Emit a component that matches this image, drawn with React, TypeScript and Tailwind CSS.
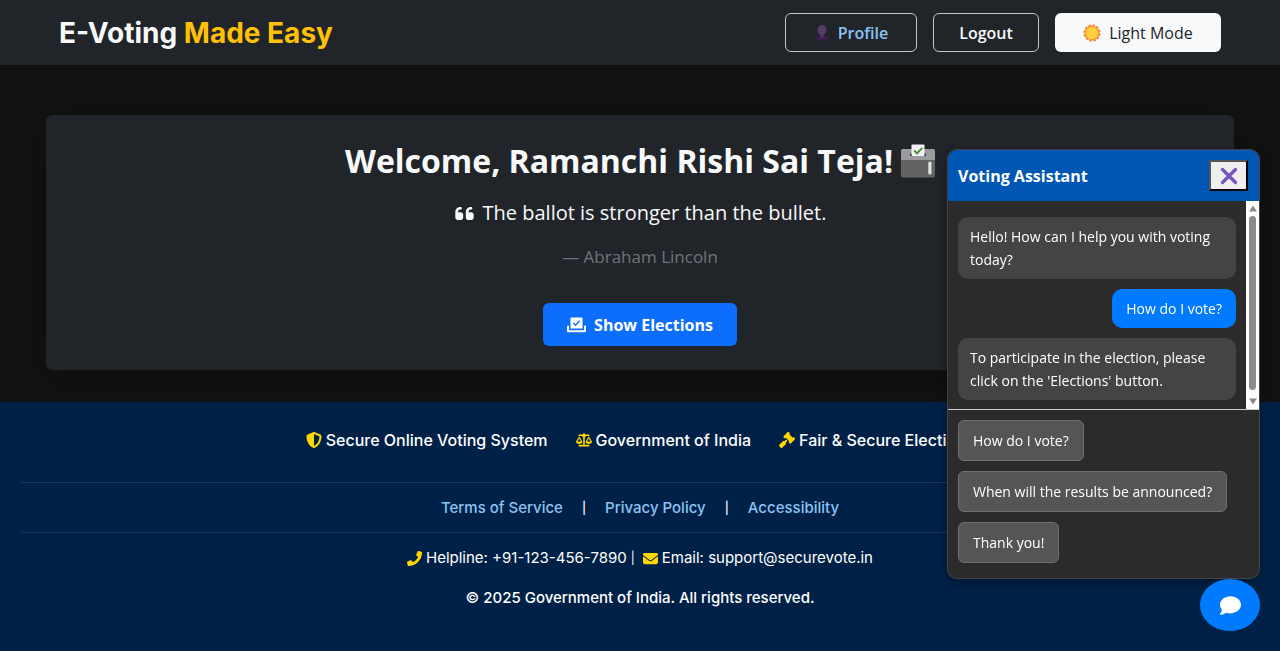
import { FaPhone } from 'react-icons/fa';
import { FaComment, FaEnvelope, FaGavel, FaQuoteLeft, FaScaleBalanced, FaShieldHalved } from 'react-icons/fa6';

const messages = [
  { from: 'bot', text: 'Hello! How can I help you with voting today?' },
  { from: 'user', text: 'How do I vote?' },
  { from: 'bot', text: "To participate in the election, please click on the 'Elections' button." },
];

const quickReplies = ['How do I vote?', 'When will the results be announced?', 'Thank you!'];

function ProfileIcon() {
  return (
    <svg viewBox="0 0 16 16" className="size-4" aria-hidden="true">
      <path d="M.8 15.600c.2-2.400 1.600-4 4.200-4.700l3 3.600 3-3.600c2.600.7 4 2.300 4.200 4.700z" fill="#3a1d4c" />
      <path d="M5.800 8h4.400v3.600L8 14.500l-2.200-2.900z" fill="#4c2d62" />
      <ellipse cx="8" cy="5" rx="4.500" ry="4.900" fill="#593a6d" />
    </svg>
  );
}

function SunIcon() {
  return (
    <svg viewBox="0 0 18 18" className="size-[18px]" aria-hidden="true">
      <circle cx="9" cy="9" r="7.600" fill="none" stroke="#f78a32" strokeWidth="2" strokeDasharray="2.700 1.280" />
      <circle cx="9" cy="9" r="7.300" fill="#f98f35" />
      <circle cx="9" cy="9" r="6.200" fill="#ffcf3f" />
    </svg>
  );
}

function BallotBoxIcon() {
  return (
    <svg viewBox="0 0 34 34" className="size-[34px]" aria-hidden="true">
      <rect x="0" y="5" width="34" height="28.500" rx="2" fill="#636363" />
      <path d="M0 16V7a2 2 0 0 1 2-2h30a2 2 0 0 1 2 2v9z" fill="#9b9b9b" />
      <rect x="9" y="9.500" width="16" height="2.500" rx="1" fill="#1d2340" />
      <rect x="10.500" y="0.500" width="13" height="11.500" rx="0.800" fill="#f4f0f7" />
      <path d="M13.200 6.500l2.800 2.800 5.200-5.500" fill="none" stroke="#44902f" strokeWidth="1.900" />
      <rect x="27.300" y="17.500" width="3.200" height="13" rx="1.500" fill="#e2e2e2" />
    </svg>
  );
}

function BallotIcon() {
  return (
    <svg viewBox="0 0 19 16" className="h-4 w-[19px]" aria-hidden="true">
      <path d="M4.500 .5h10a1 1 0 0 1 1 1V11.500H3.500V1.500a1 1 0 0 1 1-1z" fill="#fff" />
      <path d="M6.300 6l2.300 2.300 4.100-4.500" fill="none" stroke="#0d6efd" strokeWidth="1.400" />
      <path d="M1 9.500v4.300a.5.5 0 0 0 .5.5h16a.5.5 0 0 0 .5-.5V9.500" fill="none" stroke="#fff" strokeWidth="2" strokeLinecap="round" />
    </svg>
  );
}

function Scrollbar() {
  return (
    <div className="flex w-[13px] shrink-0 flex-col items-center bg-white py-1" aria-hidden="true">
      <svg viewBox="0 0 8 7" className="h-[7px] w-2"><path d="M4 .5L8 6.500H0z" fill="#8b8b8b" /></svg>
      <div className="mt-1 mb-2 w-[7px] grow rounded-full bg-[#8b8b8b]" />
      <svg viewBox="0 0 8 7" className="h-[7px] w-2"><path d="M0 .5h8L4 6.500z" fill="#8b8b8b" /></svg>
    </div>
  );
}

export default function App() {
  return (
    <div className="flex min-h-screen flex-col bg-[#121212] font-['Open_Sans','Noto_Sans',sans-serif] text-[#f8f9fa]">
      <header className="flex h-[65px] items-center justify-between bg-[#212529] px-[59px]">
        <h1 className="font-['Inter',sans-serif] text-[28px] leading-none font-bold">
          E-Voting <span className="text-[#ffc107]">Made Easy</span>
        </h1>
        <nav className="flex gap-4 text-base font-semibold">
          <a href="#profile" className="flex h-[39px] w-[132px] items-center justify-center gap-2 rounded-md border border-[#c4c6c8] text-[#8bc4f4]">
            <ProfileIcon /> Profile
          </a>
          <button type="button" className="h-[39px] w-[106px] rounded-md border border-[#c4c6c8]">Logout</button>
          <button type="button" className="flex h-[39px] w-[166px] items-center justify-center gap-2 rounded-md bg-[#f8f9fa] font-medium text-[#212529]">
            <SunIcon /> Light Mode
          </button>
        </nav>
      </header>

      <main className="px-[46px] pt-[50px] pb-8">
        <section className="flex h-[255px] flex-col items-center rounded-md bg-[#212529] pt-6 shadow-[0_8px_48px_rgba(0,0,0,0.25)]">
          <h2 className="flex items-center gap-2 text-[32px] leading-[44px] font-bold">
            Welcome, Ramanchi Rishi Sai Teja! <BallotBoxIcon />
          </h2>
          <p className="mt-[14px] flex items-center gap-2 text-xl leading-8">
            <FaQuoteLeft className="size-[21px]" /> The ballot is stronger than the bullet.
          </p>
          <p className="mt-4 text-[17px] leading-6 text-[#6c757d]">— Abraham Lincoln</p>
          <button type="button" className="mt-[34px] flex h-[43px] w-[194px] items-center justify-center gap-2 rounded-md bg-[#0d6efd] text-base font-bold text-white">
            <BallotIcon /> Show Elections
          </button>
        </section>
      </main>

      <footer className="grow bg-[#002147] px-[21px] pt-[26px] font-['Inter',sans-serif] text-[15px] leading-6 text-white">
        <div className="flex justify-center gap-7 pb-[30px] text-base font-medium">
          <span className="flex items-center gap-1"><FaShieldHalved className="size-4 text-[#ffd700]" />Secure Online Voting System</span>
          <span className="flex items-center gap-1"><FaScaleBalanced className="size-4 text-[#ffd700]" />Government of India</span>
          <span className="flex items-center gap-1"><FaGavel className="size-4 text-[#ffd700]" />Fair &amp; Secure Elections</span>
        </div>
        <nav className="flex h-[51px] items-center justify-center gap-[19px] border-y border-[#1a375a] font-medium">
          <a href="#terms" className="text-[#8bc4f4]">Terms of Service</a>
          <span className="text-xs">|</span>
          <a href="#privacy" className="text-[#8bc4f4]">Privacy Policy</a>
          <span className="text-xs">|</span>
          <a href="#accessibility" className="text-[#8bc4f4]">Accessibility</a>
        </nav>
        <p className="mt-[13px] flex items-center justify-center gap-1">
          <FaPhone className="size-[15px] text-[#ffd700]" />Helpline: +91-123-456-7890 <span className="text-xs">|</span>
          <FaEnvelope className="ml-1 size-[15px] text-[#ffd700]" />Email: support@securevote.in
        </p>
        <p className="mt-4 text-center font-medium">© 2025 Government of India. All rights reserved.</p>
      </footer>

      <aside className="fixed right-5 bottom-[72px] w-[313px] overflow-hidden rounded-[10px] border border-[#444] bg-[#2b2b2b] text-[14px] text-white shadow-[0_4px_12px_rgba(0,0,0,0.3)]">
        <div className="flex h-[51px] items-center justify-between bg-[#0056b3] pr-[11px] pl-[10px]">
          <h3 className="text-base font-bold">Voting Assistant</h3>
          <button type="button" aria-label="Close" className="flex h-[31px] w-[39px] items-center justify-center border-2 border-t-[#555] border-r-black border-b-black border-l-[#555] bg-[#efefef]">
            <svg viewBox="0 0 18 18" className="size-[18px]"><path d="M2.500 2.500l13 13M15.500 2.500l-13 13" stroke="#7657c1" strokeWidth="3.400" strokeLinecap="round" /></svg>
          </button>
        </div>
        <div className="flex h-[209px] border-b border-[#ccc]">
          <div className="flex grow flex-col gap-[10px] px-[10px] pt-4 leading-[23px]">
            {messages.map((m) => (
              <p key={m.text} className={m.from === 'user' ? 'self-end rounded-[10px] bg-[#007bff] px-[14px] py-2' : 'rounded-[10px] bg-[#444] px-3 py-2'}>
                {m.text}
              </p>
            ))}
          </div>
          <Scrollbar />
        </div>
        <div className="flex flex-col items-start gap-[10px] px-[10px] pt-[10px] pb-[15px]">
          {quickReplies.map((q) => (
            <button key={q} type="button" className="h-[41px] rounded-md border border-[#707070] bg-[#555] px-[14px]">{q}</button>
          ))}
        </div>
      </aside>
      <button type="button" aria-label="Open chat" className="fixed right-5 bottom-5 flex h-[52px] w-[60px] items-center justify-center rounded-[50%] bg-[#007bff] text-white">
        <FaComment className="size-[21px]" />
      </button>
    </div>
  );
}
